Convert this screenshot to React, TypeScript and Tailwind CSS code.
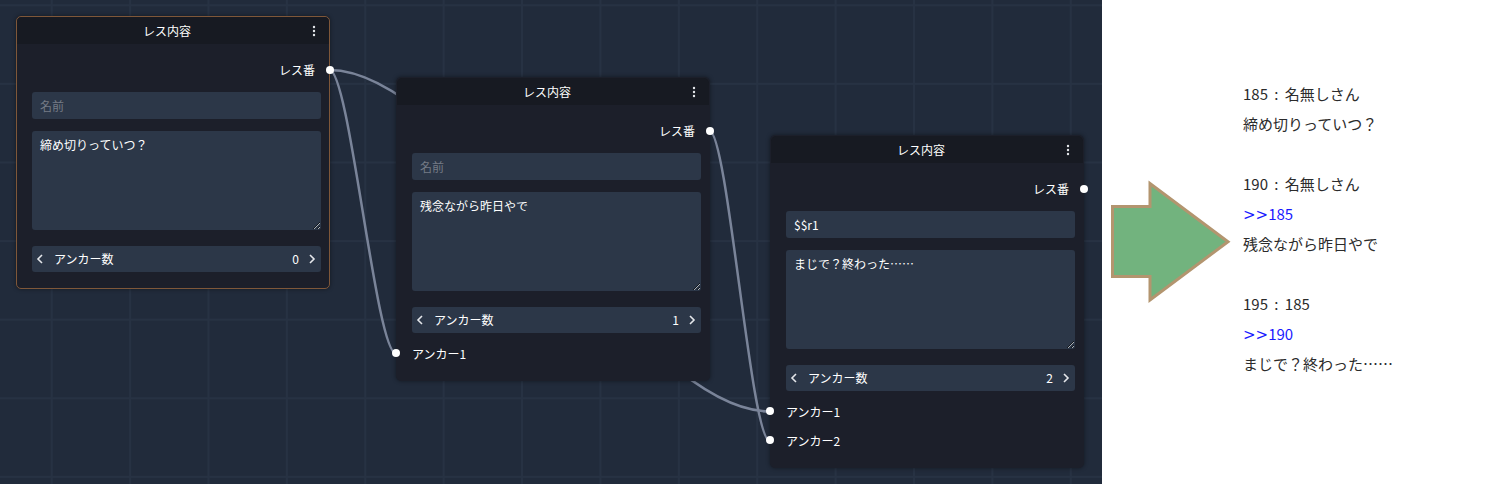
import React from "react";

const FONT = "font-['Noto_Sans_CJK_JP','Noto_Sans',sans-serif]";

function Kebab() {
  return (
    <svg width="12" height="12" viewBox="0 0 12 12" className="shrink-0">
      <circle cx="6" cy="2" r="1.2" fill="#e5e7eb" />
      <circle cx="6" cy="6" r="1.2" fill="#e5e7eb" />
      <circle cx="6" cy="10" r="1.2" fill="#e5e7eb" />
    </svg>
  );
}

function ChevL() {
  return (
    <svg width="10" height="12" viewBox="0 0 10 12">
      <polyline points="7,2 3,6 7,10" fill="none" stroke="#e5e7eb" strokeWidth="1.6" />
    </svg>
  );
}
function ChevR() {
  return (
    <svg width="10" height="12" viewBox="0 0 10 12">
      <polyline points="3,2 7,6 3,10" fill="none" stroke="#e5e7eb" strokeWidth="1.6" />
    </svg>
  );
}

type NodeProps = {
  left: string;
  top: string;
  selected?: boolean;
  name?: string;
  text: string;
  count: number;
};

function Node({ left, top, selected, name, text, count }: NodeProps) {
  const anchors = Array.from({ length: count }, (_, i) => i + 1);
  return (
    <div
      className={`absolute ${left} ${top} w-[314px] rounded-[5px] border bg-[#1c1f2a] shadow-[0_0_4px_rgba(0,0,0,0.45)] ${
        selected ? "border-[#7f5739]" : "border-[#1c1f2a]"
      }`}
    >
      <div className="flex h-[27px] items-center rounded-t-[5px] bg-[#171a22] px-[9px]">
        <div className="flex-1 text-center text-[12px] leading-none text-white">レス内容</div>
        <Kebab />
      </div>
      <div className={`pl-[15px] pr-[8px] pt-[14px] ${count > 0 ? "pb-[12px]" : "pb-[16px]"}`}>
        <div className="relative flex h-[24px] items-center justify-end pr-[6px] text-[12px] text-white">
          レス番
          <span className="absolute right-[-13px] top-[8px] h-[8px] w-[8px] rounded-full bg-white" />
        </div>
        <input
          readOnly
          defaultValue={name ?? ""}
          placeholder="名前"
          className={`mt-[10px] block h-[27px] w-full rounded-[3px] bg-[#2c3748] px-[8px] text-[12px] text-white outline-none placeholder:text-[#757b86] ${FONT}`}
        />
        <textarea
          readOnly
          defaultValue={text}
          className={`mt-[12px] block h-[99px] w-full resize-y rounded-[3px] bg-[#2c3748] px-[8px] py-[6px] text-[12px] leading-[16px] text-white outline-none [color-scheme:dark] ${FONT}`}
        />
        <div className="mt-[16px] flex h-[26px] items-center rounded-[3px] bg-[#2c3748] text-[12px] text-white">
          <span className="ml-[3px] flex w-[10px] justify-center">
            <ChevL />
          </span>
          <span className="ml-[9px] flex-1">アンカー数</span>
          <span className="mr-[8px]">{count}</span>
          <span className="mr-[4px] flex w-[10px] justify-center">
            <ChevR />
          </span>
        </div>
        {count > 0 && (
          <div className="mt-[6px]">
            {anchors.map((a) => (
              <div key={a} className="relative flex h-[29px] items-center text-[12px] text-white">
                <span className="absolute left-[-20px] top-[10px] h-[8px] w-[8px] rounded-full bg-white" />
                アンカー{a}
              </div>
            ))}
          </div>
        )}
      </div>
    </div>
  );
}

export default function App() {
  return (
    <div className={`flex h-[484px] w-[1500px] ${FONT}`}>
      <div className="relative h-[484px] w-[1102px] shrink-0 overflow-hidden bg-[#212b3b] bg-[linear-gradient(to_right,#273243_2px,transparent_2px),linear-gradient(to_bottom,#273243_2px,transparent_2px)] bg-[length:78.4px_78.6px] bg-[position:-27.7px_4.3px]">
        <svg className="absolute left-0 top-0" width="1102" height="484">
          <g fill="none" stroke="#7a8499" strokeWidth="2.5">
            <path d="M 329.5 70 C 349.5 70, 376 353.5, 396 353.5" />
            <path d="M 329.5 70 C 461.5 70, 637 411.5, 769.5 411.5" />
            <path d="M 709.5 131 C 727.5 131, 751 440.5, 769.5 440.5" />
          </g>
        </svg>
        <Node left="left-[16px]" top="top-[16px]" selected text="締め切りっていつ？" count={0} />
        <Node left="left-[396px]" top="top-[77px]" text="残念ながら昨日やで" count={1} />
        <Node left="left-[770px]" top="top-[135px]" name="$$r1" text="まじで？終わった……" count={2} />
      </div>
      <div className="flex flex-1 items-start bg-white">
        <svg className="ml-[6px] mt-[176px] shrink-0" width="126" height="132" viewBox="0 0 126 132">
          <polygon
            points="4.5,30.5 42,30.5 42,7.5 120,65.7 42,124 42,100.5 4.5,100.5"
            fill="#72b37e"
            stroke="#b3956f"
            strokeWidth="3"
          />
        </svg>
        <div className="ml-[9px] pt-[79px] text-[15px] leading-[30px] text-[#2b2b2b]">
          <div>
            <div className="h-[30px] [word-spacing:3px]">185 : 名無しさん</div>
            <div className="h-[30px]">締め切りっていつ？</div>
          </div>
          <div className="mt-[30px]">
            <div className="h-[30px] [word-spacing:3px]">190 : 名無しさん</div>
            <div className="h-[30px] overflow-hidden text-[#1a1aff]">
              <span className="font-['DejaVu_Sans',sans-serif]">&gt;&gt;</span>185
            </div>
            <div className="h-[30px]">残念ながら昨日やで</div>
          </div>
          <div className="mt-[30px]">
            <div className="h-[30px] [word-spacing:3px]">195 : 185</div>
            <div className="h-[30px] overflow-hidden text-[#1a1aff]">
              <span className="font-['DejaVu_Sans',sans-serif]">&gt;&gt;</span>190
            </div>
            <div className="h-[30px]">まじで？終わった……</div>
          </div>
        </div>
      </div>
    </div>
  );
}
